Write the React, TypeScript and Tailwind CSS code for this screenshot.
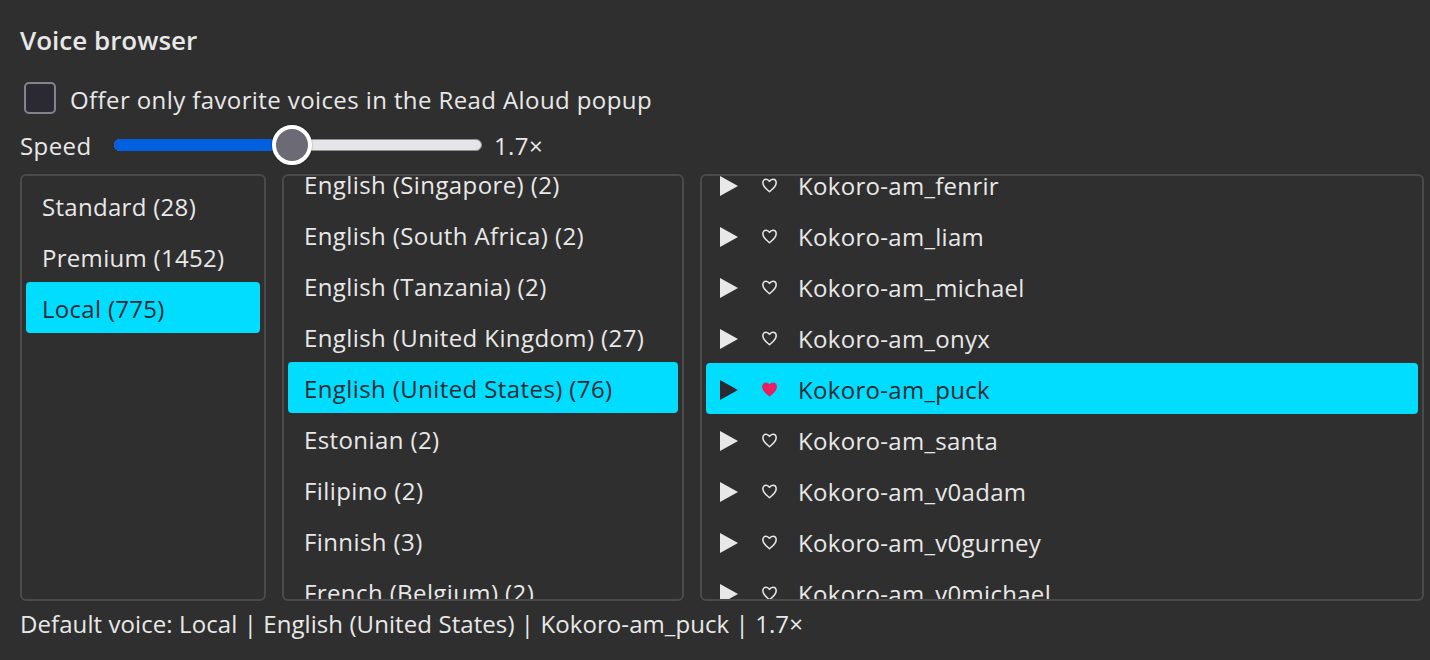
const font = "font-['Open_Sans','Noto_Sans',sans-serif]";

const categories = [
  { label: "Standard (28)" },
  { label: "Premium (1452)" },
  { label: "Local (775)", selected: true },
];

const languages = [
  { label: "English (Singapore) (2)" },
  { label: "English (South Africa) (2)" },
  { label: "English (Tanzania) (2)" },
  { label: "English (United Kingdom) (27)" },
  { label: "English (United States) (76)", selected: true },
  { label: "Estonian (2)" },
  { label: "Filipino (2)" },
  { label: "Finnish (3)" },
  { label: "French (Belgium) (2)" },
];

const voices = [
  { label: "Kokoro-am_fenrir" },
  { label: "Kokoro-am_liam" },
  { label: "Kokoro-am_michael" },
  { label: "Kokoro-am_onyx" },
  { label: "Kokoro-am_puck", selected: true },
  { label: "Kokoro-am_santa" },
  { label: "Kokoro-am_v0adam" },
  { label: "Kokoro-am_v0gurney" },
  { label: "Kokoro-am_v0michael" },
];

function Play({ dark }: { dark?: boolean }) {
  return (
    <svg width="18" height="20" viewBox="0 0 18 20" className="shrink-0">
      <polygon points="0,0 18,10 0,20" fill={dark ? "#2b2a33" : "#e8e8e8"} />
    </svg>
  );
}

function Heart({ filled }: { filled?: boolean }) {
  return (
    <svg width="15" height="15" viewBox="0.8 1.2 14.4 13.8" className="block shrink-0">
      <path
        d="M8 14C5.4 11.9 1.6 9.3 1.6 5.5 1.6 3.5 3 2.1 4.7 2.1c1.4 0 2.5.8 3.3 2.1.8-1.3 1.9-2.1 3.3-2.1 1.7 0 3.1 1.4 3.1 3.4 0 3.8-3.8 6.4-6.4 8.5z"
        fill={filled ? "#e91e63" : "none"}
        stroke={filled ? "#e91e63" : "#e8e8e8"}
        strokeWidth="1.5"
        strokeLinejoin="round"
      />
    </svg>
  );
}

function Row({ label, selected, tracking }: { label: string; selected?: boolean; tracking: string }) {
  return (
    <div
      className={`flex h-[51px] shrink-0 items-center whitespace-nowrap rounded-[4px] pl-4 pt-[2px] ${tracking} ${
        selected ? "bg-[#00ddff] text-[#2b2a33]" : "text-[#e8e8e8]"
      }`}
    >
      {label}
    </div>
  );
}

export default function App() {
  return (
    <div className={`h-[660px] w-[1430px] overflow-hidden bg-[#2f2f2f] pl-5 pr-1.5 pt-[22px] text-[24px] leading-[34px] text-[#e8e8e8] ${font}`}>
      <h2 className="text-[26px] font-semibold leading-[36px]">Voice browser</h2>

      <label className="mt-[24px] flex h-8 items-center pl-1">
        <span className="h-8 w-8 shrink-0 rounded-[5px] border-2 border-[#85828f] bg-[#2b2a33]" />
        <span className="ml-3.5 pt-[4px] tracking-[0.4px]">Offer only favorite voices in the Read Aloud popup</span>
      </label>

      <div className="mt-[15px] flex h-[32px] items-center">
        <span className="w-[94px] shrink-0 pt-[2px] tracking-[0.4px]">Speed</span>
        <div className="relative h-3 w-[368px] shrink-0 rounded-full border border-[#8f8d99] bg-[#e6e6e9]">
          <div className="absolute -left-px -top-px h-3 w-[170px] rounded-l-full bg-[#0060df]" />
          <div className="absolute left-[157px] top-[-15px] h-10 w-10 rounded-full border-[4px] border-white bg-[#6b6a75] shadow-[0_0_2px_#0006]" />
        </div>
        <span className="ml-3 pt-[2px] tracking-[0.4px]">1.7×</span>
      </div>

      <div className="mt-[13px] flex h-[427px] gap-4">
        <div className="w-[246px] shrink-0 overflow-hidden rounded-[6px] border-2 border-[#4a4a4a] px-1 pt-1">
          {categories.map((c) => (
            <Row key={c.label} tracking="tracking-[0.3px]" {...c} />
          ))}
        </div>
        <div className="w-[402px] shrink-0 overflow-hidden rounded-[6px] border-2 border-[#4a4a4a] px-1">
          <div className="mt-[-18px]">
            {languages.map((l) => (
              <Row key={l.label} tracking="tracking-[0.4px]" {...l} />
            ))}
          </div>
        </div>
        <div className="w-[724px] shrink-0 overflow-hidden rounded-[6px] border-2 border-[#4a4a4a] px-1">
          <div className="mt-[-17px]">
            {voices.map((v) => (
              <div
                key={v.label}
                className={`flex h-[51px] items-center whitespace-nowrap rounded-[4px] pl-3.5 pt-[2px] tracking-[0.3px] ${
                  v.selected ? "bg-[#00ddff] text-[#2b2a33]" : "text-[#e8e8e8]"
                }`}
              >
                <Play dark={v.selected} />
                <span className="ml-[24px]"><Heart filled={v.selected} /></span>
                <span className="ml-[21px]">{v.label}</span>
              </div>
            ))}
          </div>
        </div>
      </div>

      <div className="mt-[6px] tracking-[0.08px]">Default voice: Local | English (United States) | Kokoro-am_puck | 1.7×</div>
    </div>
  );
}
